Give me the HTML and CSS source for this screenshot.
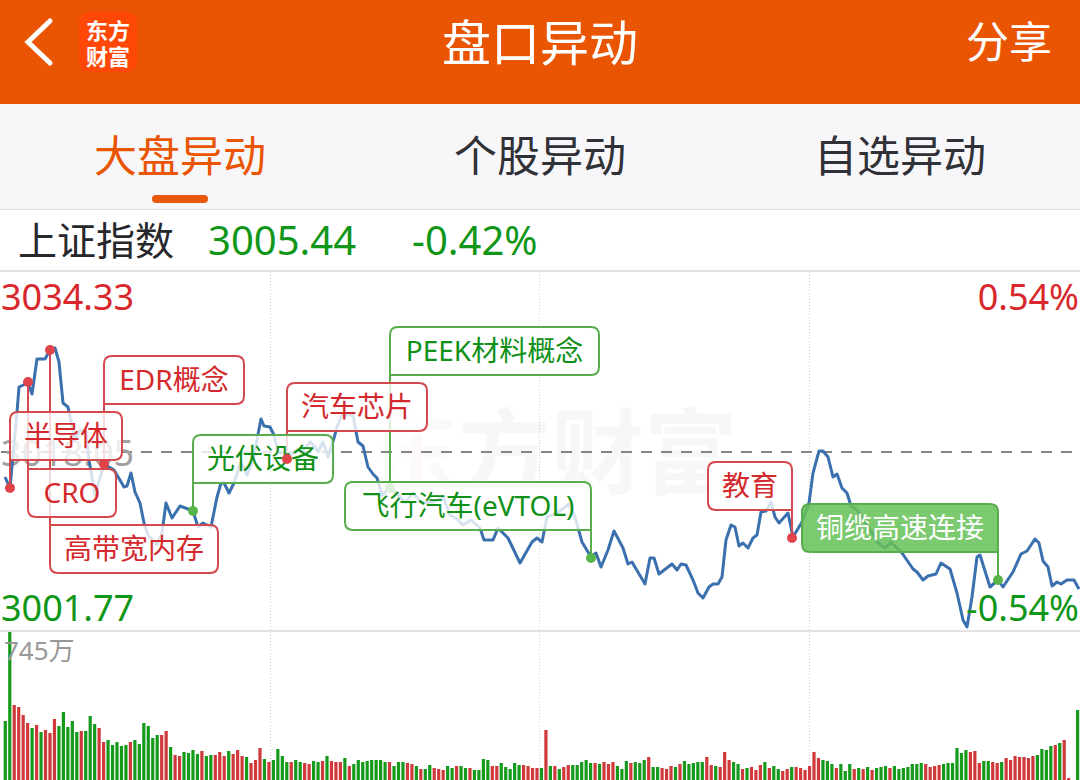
FILE: index.html
```
<!DOCTYPE html>
<html lang="zh-CN">
<head>
  <meta charset="UTF-8" />
  <meta name="viewport" content="width=device-width, initial-scale=1.0"/>
  <title>盘口异动</title>
  <link rel="stylesheet" href="styles.css">
</head>
<body>

  <header class="top-bar">
    <div class="top-left">
      <button class="back-btn" type="button" aria-label="返回">
        <svg width="32" height="52" viewBox="0 0 32 52"><path d="M27 5 L5 26 L27 47" /></svg>
      </button>
      <div class="logo"><span>东方</span><span>财富</span></div>
    </div>
    <h1>盘口异动</h1>
    <button class="share-btn" type="button">分享</button>
  </header>

  <nav class="tabs">
    <a href="#market" class="tab active">大盘异动</a>
    <a href="#stocks" class="tab">个股异动</a>
    <a href="#favorites" class="tab">自选异动</a>
  </nav>

  <main>
    <div class="quote">
      <span class="quote-name">上证指数</span>
      <span class="quote-price">3005.44</span>
      <span class="quote-change">-0.42%</span>
    </div>

    <svg class="chart" viewBox="0 270 1080 510" role="img" aria-label="上证指数分时图">
      <defs>
        <linearGradient id="watermarkFade">
          <stop offset="0" stop-color="#fff" />
          <stop offset="0.15" stop-color="#fdf9f9" />
          <stop offset="0.3" stop-color="#f7f7f7" />
        </linearGradient>
      </defs>
      <text class="watermark" x="365" y="487">东方财富</text>

      <!-- Grid -->
      <path class="grid-line" d="M0 271H1080M0 631H1080" />
      <path class="grid-dots" d="M270.5 272V780M539.5 272V780M809.5 272V780" />
      <path class="base-line" d="M1 452H1072" />

      <text class="axis mid" x="1" y="466">3018.05</text>
      <g id="volume"></g>
      <polyline id="price" class="price-line" />
      <g id="callouts"></g>

      <text class="axis up" x="1" y="310">3034.33</text>
      <text class="axis up end" x="1079" y="310">0.54%</text>
      <text class="axis down" x="1" y="621">3001.77</text>
      <text class="axis down end" x="1079" y="621">-0.54%</text>
      <text class="volume-max" x="4" y="660">745万</text>
    </svg>
  </main>

  <script src="chart.js"></script>
</body>
</html>
```
FILE: styles.css
```
* {
  box-sizing: border-box;
}

body {
  margin: 0;
  background: #fff;
  color: #26282c;
  font-family: "Noto Sans", "Noto Sans CJK SC", sans-serif;
}

button {
  border: none;
  padding: 0;
  background: none;
  color: inherit;
  font-family: inherit;
  cursor: pointer;
}

.top-bar {
  display: grid;
  grid-template-columns: 1fr auto 1fr;
  align-items: center;
  height: 104px;
  padding: 0 28px 20px;
  background: #ea5504;
  color: #fff;
}

.top-left {
  display: flex;
  align-items: center;
  gap: 24px;
  margin-left: -5px;
}

.back-btn svg {
  display: block;
  fill: none;
  stroke: #fff;
  stroke-width: 5;
  stroke-linecap: round;
  stroke-linejoin: miter;
}

.logo {
  display: flex;
  flex-direction: column;
  align-items: center;
  justify-content: center;
  width: 58px;
  height: 60px;
  border-radius: 10px;
  background: #ff4806;
  font-family: "Noto Sans CJK SC", sans-serif;
  font-size: 22px;
  font-weight: 700;
  line-height: 26px;
}

.top-bar h1 {
  margin: 0;
  font-size: 49px;
  font-weight: 400;
  line-height: 60px;
}

.share-btn {
  justify-self: end;
  font-size: 43px;
  line-height: 60px;
}

.tabs {
  display: flex;
  height: 106px;
  background: #f7f7fa;
  border-bottom: 1px solid #e0e0e3;
}

.tab {
  position: relative;
  flex: 1;
  color: #303136;
  font-size: 43px;
  line-height: 104px;
  text-align: center;
  text-decoration: none;
}

.tab.active {
  color: #ea5504;
}

.tab.active::after {
  content: "";
  position: absolute;
  left: 50%;
  bottom: 6px;
  width: 56px;
  height: 8px;
  margin-left: -28px;
  border-radius: 4px;
  background: #e9590c;
}

.quote {
  display: flex;
  align-items: center;
  height: 60px;
  padding: 0 18px;
  font-size: 40px;
  line-height: 60px;
}

.quote-name {
  margin-right: 34px;
  font-size: 39px;
}

.quote-price {
  margin-right: 56px;
}

.quote-price,
.quote-change {
  color: #109618;
}

/* Chart */
.chart {
  display: block;
  width: 100%;
  height: auto;
}

.watermark {
  fill: url(#watermarkFade);
  font-family: "Noto Sans CJK SC", sans-serif;
  font-size: 93px;
  font-weight: 700;
}

.grid-line {
  stroke: #e2e2e2;
  stroke-width: 2;
}

.grid-dots {
  stroke: #cfcfcf;
  stroke-dasharray: 1 2;
}

.base-line {
  stroke: #858585;
  stroke-width: 2;
  stroke-dasharray: 11 9;
}

.price-line {
  fill: none;
  stroke: #3a70ae;
  stroke-width: 3;
  stroke-linejoin: round;
}

.axis {
  font-size: 36px;
}

.axis.up {
  fill: #d8282c;
}

.axis.down {
  fill: #109618;
}

.axis.mid {
  fill: #a0a0a0;
}

.axis.end {
  text-anchor: end;
}

.volume-max {
  fill: #999;
  font-size: 26px;
}

.bar-up {
  fill: #d0393b;
}

.bar-down {
  fill: #159a1b;
}

.callout .box {
  fill: rgba(255, 255, 255, 0.8);
  stroke-width: 2;
}

.callout text {
  font-size: 28px;
  text-anchor: middle;
}

.pole {
  stroke-width: 2;
}

.callout.up .box,
.callout.up .pole {
  stroke: #d4494e;
}

.callout.up text {
  fill: #d4282c;
}

.callout.down .box,
.callout.down .pole {
  stroke: #58ae4c;
}

.callout.down text {
  fill: #0f9017;
}

.callout.hot .box {
  fill: rgba(102, 193, 88, 0.86);
}

.callout.hot text {
  fill: #fff;
}

.dot.up {
  fill: #e0444a;
}

.dot.down {
  fill: #58b648;
}
```
FILE: chart.js
```
const SVG_NS = 'http://www.w3.org/2000/svg';

const price = `5,477 10,488 13,455 17,412 19,387 28,383 32,394 37,359 45,359 50,350 55,348 59,362 63,403 68,407
69,412 75,440 80,430 86,432 89,460 95,495 104,464 114,470 117,475 124,487 127,486 131,473 135,492 140,503 144,523
148,535 157,545 162,533 166,503 172,518 180,506 193,511 198,527 203,523 211,527 217,497 221,483 224,483 229,493
234,483 241,462 247,475 253,460 261,419 264,426 270,427 274,435 278,452 283,453 287,458 297,450 302,452 310,442
315,447 318,452 323,442 328,457 334,438 337,427 342,415 353,415 358,442 363,446 368,467 373,474 377,478 382,495
390,488 397,493 405,503 413,493 422,503 433,502 443,497 450,515 457,519 463,525 471,520 480,528 484,540 493,540
498,528 508,538 520,563 532,542 537,538 542,542 547,517 557,513 569,504 575,517 582,542 591,557 596,553 601,567
608,550 614,531 623,548 628,564 632,562 645,584 650,558 654,558 659,574 672,564 677,570 681,564 686,565 693,580
698,593 703,598 709,587 713,584 718,584 722,577 726,540 731,525 735,527 739,546 743,543 748,548 753,538 757,535
761,512 766,511 771,502 775,517 779,523 788,513 793,537 802,522 809,503 813,473 819,451 823,451 828,457 833,477
837,474 842,488 847,493 851,506 857,510 862,517 872,533 877,542 885,548 891,542 902,553 913,569 917,572 923,580
928,576 936,574 941,563 950,569 957,593 963,620 967,627 972,597 977,557 980,555 990,587 998,580 1003,587
1013,572 1021,554 1027,551 1035,539 1039,543 1043,561 1048,567 1052,586 1057,582 1061,584 1067,580 1074,580 1079,589`;

// one entry per minute: r = up, g = down
const volume = `g59 g148 r75 r73 r65 r57 g52 r55 g48 r50 r47 r61 g54 g68 g53 g59 g48 r49 g49 g64
g56 r52 r38 g40 g35 g38 g34 g35 r38 g40 g36 g57 g54 g42 g45 r45 r49 g33 r25 r24
g28 g27 g30 g26 r29 g24 g25 r25 r28 r24 g29 r26 r30 r24 g23 r17 r20 r32 g21 r18
g20 g31 g24 g18 r18 g20 g18 r17 r16 g19 g18 r19 g24 r19 r18 r18 g22 r14 g16 g20
g18 g19 g20 g20 g20 g18 r18 g14 g18 g18 r17 r16 g14 r11 g11 g15 r12 r11 r10 g14
g12 r14 g14 g12 r12 g10 g10 g21 g20 r14 r14 g17 g13 g11 g17 g15 r15 r14 r12 r12
g12 r50 g14 r14 g11 r13 r15 g15 g15 g18 g20 g17 r17 g16 r18 r16 r18 g14 g11 g19
r17 g18 g17 g20 r23 g13 g13 r12 r11 r14 g13 r16 g19 g16 g17 g18 g18 r23 r15 g14
r13 r28 r20 g18 g16 r11 g12 r13 r10 r15 g18 r12 g14 g11 r9 r11 g13 r13 r12 r10
r14 r28 r22 g20 g19 g16 r12 g16 g9 g16 r11 g12 r11 g13 r10 g12 g13 g14 r12 g14
g11 g12 g13 g16 g16 g17 r16 r13 r14 r15 g16 g17 g17 g32 g27 g30 r28 r29 r17 g19
g19 r18 r17 g18 r22 r20 r24 r23 r23 r22 r24 g25 g31 g30 g34 r35 g37 r40 r2 g0 g70`;

// px, py: the point on the price line that the label hangs from
const callouts = [
  { text: 'EDR概念', type: 'up', x: 104, y: 356, w: 140, px: 104, py: 464 },
  { text: '高带宽内存', type: 'up', x: 50, y: 525, w: 168, px: 50, py: 350 },
  { text: 'CRO', type: 'up', x: 28, y: 469, w: 88, px: 28, py: 382 },
  { text: '半导体', type: 'up', x: 10, y: 412, w: 112, px: 10, py: 488 },
  { text: 'PEEK材料概念', type: 'down', x: 390, y: 327, w: 209, px: 390, py: 488, under: true },
  { text: '汽车芯片', type: 'up', x: 287, y: 383, w: 140, px: 287, py: 459 },
  { text: '光伏设备', type: 'down', x: 193, y: 435, w: 140, px: 193, py: 511 },
  { text: '飞行汽车(eVTOL)', type: 'down', x: 345, y: 482, w: 246, px: 591, py: 558 },
  { text: '教育', type: 'up', x: 708, y: 462, w: 84, px: 792, py: 538 },
  { text: '铜缆高速连接', type: 'down hot', x: 802, y: 504, w: 196, px: 998, py: 580 }
];

function add(parent, name, attrs) {
  const el = document.createElementNS(SVG_NS, name);
  for (const key in attrs) el.setAttribute(key, attrs[key]);
  parent.appendChild(el);
  return el;
}

// rounded box with a square corner where the pole meets it
function boxPath(c) {
  const h = 48;
  const left = c.px === c.x;
  const below = c.py > c.y;
  const tl = left && !below ? 0 : 8;
  const bl = left && below ? 0 : 8;
  const br = !left && below ? 0 : 8;
  const r = c.x + c.w;
  const b = c.y + h;
  return `M${c.x + tl} ${c.y}H${r - 8}q8 0 8 8V${b - br}q0 ${br} ${-br} ${br}H${c.x + bl}` +
    `q${-bl} 0 ${-bl} ${-bl}V${c.y + tl}q0 ${-tl} ${tl} ${-tl}Z`;
}

document.getElementById('price').setAttribute('points', price);

const volumeGroup = document.getElementById('volume');
volume.split(/\s+/).forEach((item, i) => {
  const height = Number(item.slice(1));
  add(volumeGroup, 'rect', {
    class: item[0] === 'r' ? 'bar-up' : 'bar-down',
    x: (3.7 + i * 4.468).toFixed(2),
    y: 780 - height,
    width: 3.2,
    height: height
  });
});

const calloutGroup = document.getElementById('callouts');
callouts.forEach(c => {
  const g = add(calloutGroup, 'g', { class: 'callout ' + c.type });
  const edge = c.py > c.y ? c.y + 48 : c.y;
  if (c.under) add(g, 'circle', { class: 'dot ' + c.type, cx: c.px, cy: c.py, r: 5 });
  add(g, 'path', { class: 'pole', d: `M${c.px} ${edge}V${c.py}` });
  add(g, 'path', { class: 'box', d: boxPath(c) });
  add(g, 'text', { x: c.x + c.w / 2, y: c.y + 34 }).textContent = c.text;
});

callouts.filter(c => !c.under).forEach(c => {
  add(calloutGroup, 'circle', { class: 'dot ' + c.type, cx: c.px, cy: c.py, r: 5 });
});
```
